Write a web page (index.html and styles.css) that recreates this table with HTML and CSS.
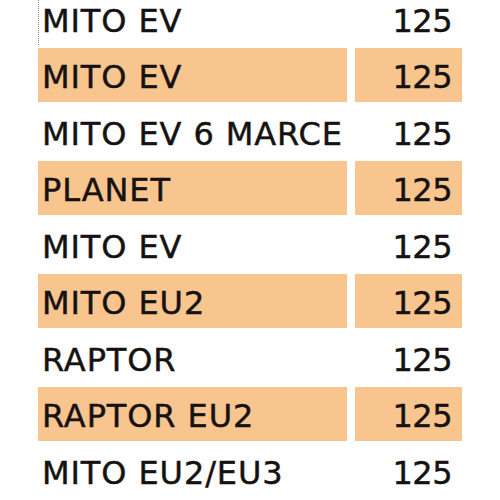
FILE: index.html
```html
<!DOCTYPE html>
<html>
<head>
<meta charset="utf-8">
<link rel="stylesheet" href="styles.css">
</head>
<body>
<div class="table">
  <div class="cell name first">MITO EV</div><div class="cell num">125</div>
  <div class="cell name hl">MITO EV</div><div class="cell num hl">125</div>
  <div class="cell name">MITO EV 6 MARCE</div><div class="cell num">125</div>
  <div class="cell name hl">PLANET</div><div class="cell num hl">125</div>
  <div class="cell name">MITO EV</div><div class="cell num">125</div>
  <div class="cell name hl">MITO EU2</div><div class="cell num hl">125</div>
  <div class="cell name">RAPTOR</div><div class="cell num">125</div>
  <div class="cell name hl">RAPTOR EU2</div><div class="cell num hl">125</div>
  <div class="cell name">MITO EU2/EU3</div><div class="cell num">125</div>
</div>
</body>
</html>
```
FILE: styles.css
```css
html, body {
  margin: 0;
  padding: 0;
  background: #ffffff;
  overflow: hidden;
}
.table {
  display: grid;
  grid-template-columns: 309px 107px;
  grid-auto-rows: 53.5px;
  column-gap: 8px;
  row-gap: 3px;
  margin: -8.5px 0 0 38px;
  font-family: "DejaVu Sans", "Liberation Sans", sans-serif;
  font-size: 32px;
  color: #161212;
  -webkit-text-stroke: 0.45px #161212;
}
.cell {
  display: flex;
  align-items: center;
  padding-top: 5px;
  box-sizing: border-box;
  white-space: nowrap;
}
.name {
  padding-left: 4px;
  letter-spacing: 0.9px;
}
.num {
  justify-content: flex-end;
  padding-right: 10px;
  letter-spacing: -0.5px;
}
.hl {
  background: #f9c58e;
}
.first {
  border-left: 1px dotted #8a8a8a;
  padding-left: 3px;
}
```
